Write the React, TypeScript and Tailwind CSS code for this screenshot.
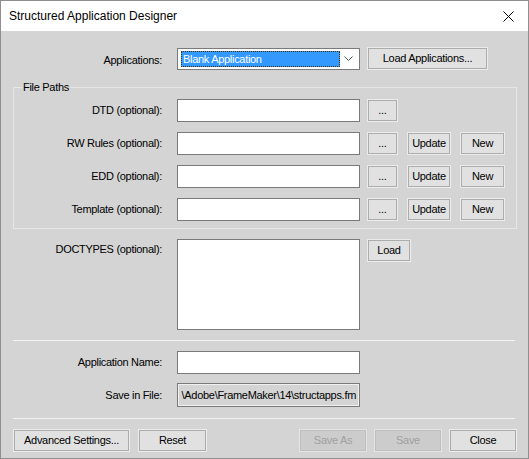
import React from "react";

const font = { fontFamily: '"Liberation Sans", Arial, sans-serif' };

function Btn({
  children,
  w,
  disabled,
}: {
  children: React.ReactNode;
  w: string;
  disabled?: boolean;
}) {
  return (
    <button
      className={
        disabled
          ? `${w} h-[23px] shrink-0 border border-[#e4e4e4] bg-[#cccccc] text-[11px] text-[#a0a0a0] shadow-[inset_0_0_0_1px_#bfbfbf] leading-none tracking-[-0.3px]`
          : `${w} h-[23px] shrink-0 border border-[#ececec] bg-[#e1e1e1] text-[11px] text-black shadow-[inset_0_0_0_1px_#adadad] leading-none tracking-[-0.3px]`
      }
    >
      {children}
    </button>
  );
}

function TextBox({ h = "h-[23px]" }: { h?: string }) {
  return <div className={`w-[183px] ${h} shrink-0 border border-[#7a7a7a] bg-white`} />;
}

function PathRow({ label, extra }: { label: string; extra?: boolean }) {
  return (
    <div className="flex h-[23px] items-center">
      <div className="w-[148px] shrink-0 text-right">{label}</div>
      <div className="ml-[15px]">
        <TextBox />
      </div>
      <div className="ml-[7px]">
        <Btn w="w-[31px]">...</Btn>
      </div>
      {extra && (
        <>
          <div className="ml-[9px]">
            <Btn w="w-[44px]">Update</Btn>
          </div>
          <div className="ml-[9px]">
            <Btn w="w-[45px]">New</Btn>
          </div>
        </>
      )}
    </div>
  );
}

export default function App() {
  return (
    <div
      className="w-[529px] h-[459px] border border-[#8f8f8f] bg-[#d4d4d4] flex flex-col text-[11px] tracking-[-0.3px] text-black overflow-hidden"
      style={font}
    >
      {/* Title bar */}
      <div className="h-[30px] bg-white flex items-center justify-between pl-[8px] pr-[14px] shrink-0">
        <span className="text-[12px] tracking-normal">Structured Application Designer</span>
        <svg width="11" height="11" viewBox="0 0 11 11">
          <path d="M0.5 0.5 L10.5 10.5 M10.5 0.5 L0.5 10.5" stroke="#000" strokeWidth="1" />
        </svg>
      </div>

      <div className="flex flex-col pl-[12px] pr-[11px]">
        {/* Applications */}
        <div className="mt-[16px] flex items-start">
          <div className="w-[149px] shrink-0 text-right mt-[5px]">Applications:</div>
          <div className="ml-[15px] mt-[1px] w-[183px] h-[22px] border border-[#7a7a7a] bg-white flex items-center pl-[3px] pr-[6px]">
            <div className="w-[159px] h-[16px] bg-[#3399ff] border border-dotted border-[#4a3000] text-white flex items-center pl-[1px]">
              Blank Application
            </div>
            <svg className="ml-auto" width="9" height="6" viewBox="0 0 9 6">
              <polyline points="0.5,0.5 4.5,4.5 8.5,0.5" fill="none" stroke="#555" strokeWidth="1" />
            </svg>
          </div>
          <div className="ml-[7px]">
            <Btn w="w-[121px]">Load Applications...</Btn>
          </div>
        </div>

        {/* File Paths group */}
        <fieldset className="mt-[11px] border border-[#e6e6e6] pb-[7px]">
          <legend className="ml-[8px] px-[1px] leading-[13px]">File Paths</legend>
          <div className="mt-[5px] flex flex-col gap-[10px]">
            <PathRow label="DTD (optional):" />
            <PathRow label="RW Rules (optional):" extra />
            <PathRow label="EDD (optional):" extra />
            <PathRow label="Template (optional):" extra />
          </div>
        </fieldset>

        {/* DOCTYPES */}
        <div className="mt-[10px] flex items-start">
          <div className="w-[149px] shrink-0 text-right mt-[2px]">DOCTYPES (optional):</div>
          <div className="ml-[15px]">
            <TextBox h="h-[91px]" />
          </div>
          <div className="ml-[7px]">
            <Btn w="w-[44px]">Load</Btn>
          </div>
        </div>

        <div className="mt-[10px] mr-[2px] border-t border-[#f2f2f2]" />

        {/* Application name */}
        <div className="mt-[10px] flex h-[23px] items-center">
          <div className="w-[149px] shrink-0 text-right">Application Name:</div>
          <div className="ml-[15px]">
            <TextBox />
          </div>
        </div>

        <div className="mt-[9px] flex h-[24px] items-center">
          <div className="w-[149px] shrink-0 text-right">Save in File:</div>
          <div className="ml-[15px] w-[183px] h-[24px] border border-[#7a7a7a] bg-[#d4d4d4] shadow-[inset_0_0_0_1px_#f0f0f0] flex justify-end items-center overflow-hidden whitespace-nowrap pr-[3px]">
            <span className="shrink-0">\Adobe\FrameMaker\14\structapps.fm</span>
          </div>
        </div>

        <div className="mt-[11px] mr-[2px] border-t border-[#f2f2f2]" />

        {/* Bottom buttons */}
        <div className="mt-[10px] flex items-center">
          <Btn w="w-[117px]">Advanced Settings...</Btn>
          <div className="ml-[8px]">
            <Btn w="w-[69px]">Reset</Btn>
          </div>
          <div className="ml-auto flex gap-[7px]">
            <Btn w="w-[68px]" disabled>
              Save As
            </Btn>
            <Btn w="w-[68px]" disabled>
              Save
            </Btn>
            <Btn w="w-[68px]">Close</Btn>
          </div>
        </div>
      </div>
    </div>
  );
}
